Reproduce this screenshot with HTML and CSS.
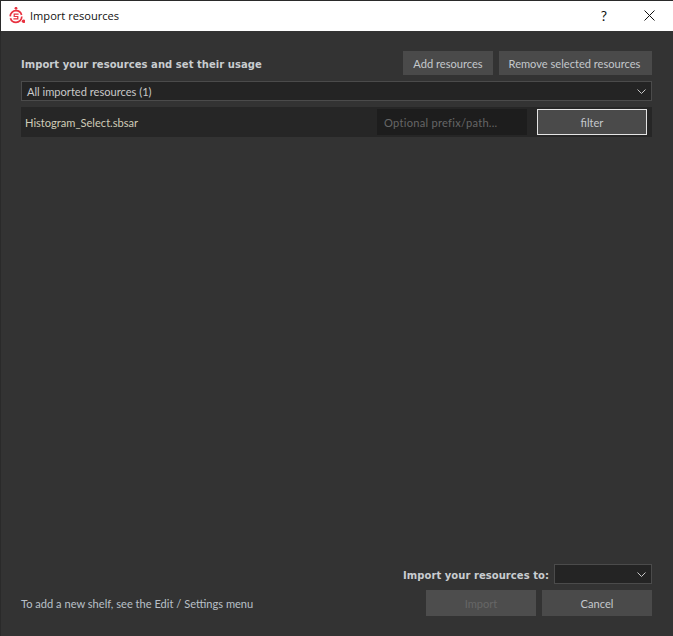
FILE: index.html
```html
<!DOCTYPE html>
<html lang="en">
<head>
<meta charset="utf-8">
<title>Import resources</title>
<link rel="stylesheet" href="styles.css">
</head>
<body>
<div class="window">
  <header class="titlebar">
    <svg class="logo" width="16" height="18" viewBox="0 0 16 18">
      <circle cx="7" cy="1.3" r="1.4" fill="#e8313f"/>
      <circle cx="7" cy="9.500" r="5.800" fill="none" stroke="#e8313f" stroke-width="1.700" stroke-dasharray="16 1.900"/>
      <path d="M9.600 7.200H5.200V9.500H8.800V11.800H4.400" fill="none" stroke="#e8313f" stroke-width="1.200"/>
      <circle cx="14.600" cy="14.200" r="1.800" fill="#e8313f"/>
    </svg>
    <span class="title">Import resources</span>
    <span class="help">?</span>
    <svg class="close" width="11" height="11" viewBox="0 0 11 11"><path d="M.5.5l10 10M10.500.5l-10 10" stroke="#111" stroke-width="1" fill="none"/></svg>
  </header>
  <main class="body">
    <div class="toprow">
      <h1 class="heading">Import your resources and set their usage</h1>
      <button class="btn add">Add resources</button>
      <button class="btn remove">Remove selected resources</button>
    </div>
    <div class="select allres">
      <span>All imported resources (1)</span>
      <svg class="chev" width="9" height="5" viewBox="0 0 9 5"><path d="M.5.500L4.500 4.500L8.500.5" stroke="#c8c8c8" fill="none"/></svg>
    </div>
    <div class="resource">
      <span class="resname">Histogram_Select.sbsar</span>
      <span class="prefix">Optional prefix/path...</span>
      <button class="btn filter">filter</button>
    </div>
    <div class="spacer"></div>
    <div class="destrow">
      <span class="heading">Import your resources to:</span>
      <div class="select dest">
        <svg class="chev" width="9" height="5" viewBox="0 0 9 5"><path d="M.5.500L4.500 4.500L8.500.5" stroke="#c8c8c8" fill="none"/></svg>
      </div>
    </div>
    <div class="bottomrow">
      <span class="hint">To add a new shelf, see the Edit / Settings menu</span>
      <button class="btn action disabled">Import</button>
      <button class="btn action">Cancel</button>
    </div>
  </main>
</div>
</body>
</html>
```
FILE: styles.css
```css
* { box-sizing: border-box; }
html, body { margin: 0; height: 100%; }
body { background: #333; font-family: "Lato", "Open Sans", sans-serif; font-size: 11.1px; color: #c9c9c9; }
.window { width: 673px; height: 636px; display: flex; flex-direction: column; border: 1px solid #2a2a2a; border-bottom: 0; border-right: 0; }
.titlebar { height: 30px; flex: none; background: #fff; display: flex; align-items: center; color: #111; padding: 0 0 1px 8px; }
.logo { margin-right: 5px; }
.title { font-family: "Open Sans", sans-serif; font-size: 11.1px; flex: 1; }
.help { font-size: 14px; width: 14px; text-align: center; color: #111; margin-right: 33px; }
.close { margin-right: 18px; }
.body { flex: 1; display: flex; flex-direction: column; padding: 20px 21px 20px 20px; }
.toprow { display: flex; align-items: center; gap: 6px; height: 24px; }
.heading { margin: 0; padding-top: 2px; font-family: "DejaVu Sans", sans-serif; font-weight: 700; font-size: 10px; letter-spacing: .05px; color: #c9cdd0; }
.toprow .heading { flex: 1; }
.btn { border: 0; background: #4a4a4a; color: #c4c8cc; font-family: inherit; font-size: inherit; padding: 1px 0 0; height: 24px; }
.add { width: 90px; }
.remove { width: 153px; padding-right: 2px; }
.select { height: 20px; background: #242424; border: 1px solid #4b4b4b; display: flex; align-items: center; justify-content: space-between; padding: 0 5px; }
.allres { margin-top: 6px; }
.chev { flex: none; margin-left: auto; }
.resource { margin-top: 6px; height: 30px; background: #262626; display: flex; align-items: center; padding-left: 4px; }
.resname { flex: 1; color: #d0ccb8; }
.prefix { width: 150px; height: 26px; background: #1d1d1d; color: #666; display: flex; align-items: center; padding-left: 7px; margin-right: 10px; letter-spacing: .27px; }
.filter { width: 110px; height: 26px; margin-right: 5px; border: 1px solid #e4e4e4; background: #4a4a4a; }
.spacer { flex: 1; }
.destrow { display: flex; justify-content: flex-end; align-items: center; gap: 5px; height: 20px; }
.dest { width: 98px; }
.bottomrow { display: flex; align-items: center; gap: 6px; height: 26px; margin-top: 6px; }
.hint { flex: 1; color: #b9c0c8; }
.action { width: 110px; height: 26px; }
.disabled { background: #4d4d4d; color: #666; }
```
